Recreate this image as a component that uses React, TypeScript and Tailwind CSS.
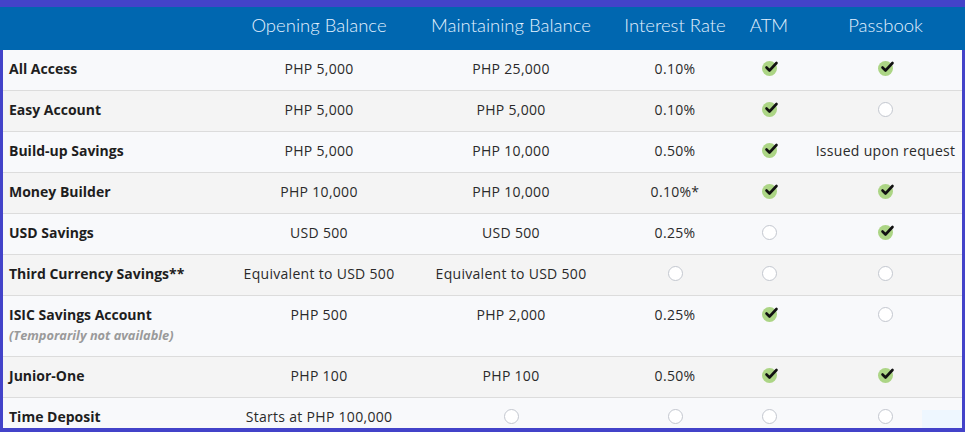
import React from 'react';

type Cell = string | boolean | null;

type Row = {
  name: string;
  note?: string;
  cells: Cell[];
};

// true = available (green check), false = not available (empty circle)
const rows: Row[] = [
  { name: 'All Access', cells: ['PHP 5,000', 'PHP 25,000', '0.10%', true, true] },
  { name: 'Easy Account', cells: ['PHP 5,000', 'PHP 5,000', '0.10%', true, false] },
  { name: 'Build-up Savings', cells: ['PHP 5,000', 'PHP 10,000', '0.50%', true, 'Issued upon request'] },
  { name: 'Money Builder', cells: ['PHP 10,000', 'PHP 10,000', '0.10%*', true, true] },
  { name: 'USD Savings', cells: ['USD 500', 'USD 500', '0.25%', false, true] },
  { name: 'Third Currency Savings**', cells: ['Equivalent to USD 500', 'Equivalent to USD 500', false, false, false] },
  { name: 'ISIC Savings Account', note: '(Temporarily not available)', cells: ['PHP 500', 'PHP 2,000', '0.25%', true, false] },
  { name: 'Junior-One', cells: ['PHP 100', 'PHP 100', '0.50%', true, true] },
  { name: 'Time Deposit', cells: ['Starts at PHP 100,000', false, false, false, false] },
];

const headers = ['Opening Balance', 'Maintaining Balance', 'Interest Rate', 'ATM', 'Passbook'];

const gridCols = 'grid grid-cols-[222px_188px_196px_132px_56px_1fr]';

function Check() {
  return (
    <span className="relative inline-block w-[15px] h-[15px]">
      <span className="absolute inset-0 rounded-full bg-[#acd585]" />
      <svg
        viewBox="0 0 16 16"
        className="absolute left-[1px] top-[-2px] w-[16px] h-[16px]"
        fill="none"
        stroke="#111"
        strokeWidth="2.6"
        strokeLinecap="round"
        strokeLinejoin="round"
      >
        <path d="M3.5 8.5 6.5 11.5 13.5 4" />
      </svg>
    </span>
  );
}

function Empty() {
  return <span className="inline-block w-[15px] h-[15px] rounded-full border border-[#c3c7cf] bg-white" />;
}

function CellContent({ value }: { value: Cell }) {
  if (value === true) return <Check />;
  if (value === false) return <Empty />;
  return <span className="tracking-[0.3px]">{value}</span>;
}

export default function App() {
  return (
    <div className="w-[965px] h-[432px] overflow-hidden bg-[#4343c9] font-['Open_Sans',sans-serif] relative">
      <div className="h-[7px]" />
      <div className={`${gridCols} h-[43px] bg-[#0067b0] pl-[3px] pr-[3px] pb-[6px] items-center text-[18.5px] font-light text-[#e3f1ff] font-['Lato',sans-serif]`}>
        <div />
        {headers.map((h, i) => (
          <div key={h} className={`text-center whitespace-nowrap ${i === 4 ? 'pl-3' : ''}`}>
            {h}
          </div>
        ))}
      </div>
      <div className="mx-[3px] h-[378px] overflow-hidden">
        {rows.map((row, idx) => (
          <div
            key={row.name}
            className={`${gridCols} border-b border-[#dcdcdc] text-[14px] text-[#2a2a2a] leading-[19px] ${
              idx % 2 === 0 ? 'bg-[#f8f9fb]' : 'bg-[#f4f4f4]'
            }`}
          >
            <div className="pl-[6px] pt-[9px] pb-[12px]">
              <div className="font-bold text-[#1e1e1e]">{row.name}</div>
              {row.note && (
                <div className="mt-[2px] text-[12.8px] leading-[18px] italic font-bold text-[#9a9a9a]">{row.note}</div>
              )}
            </div>
            {row.cells.map((c, i) => (
              <div
                key={i}
                className={`flex justify-center items-start whitespace-nowrap ${
                  typeof c === 'boolean' ? 'pt-[11px]' : 'pt-[9px]'
                } ${i === 4 ? 'pl-3' : ''}`}
              >
                <CellContent value={c} />
              </div>
            ))}
          </div>
        ))}
      </div>
      <div className="absolute right-[3px] bottom-[4px] w-[40px] h-[18px] bg-[#eef7ff]" />
    </div>
  );
}
